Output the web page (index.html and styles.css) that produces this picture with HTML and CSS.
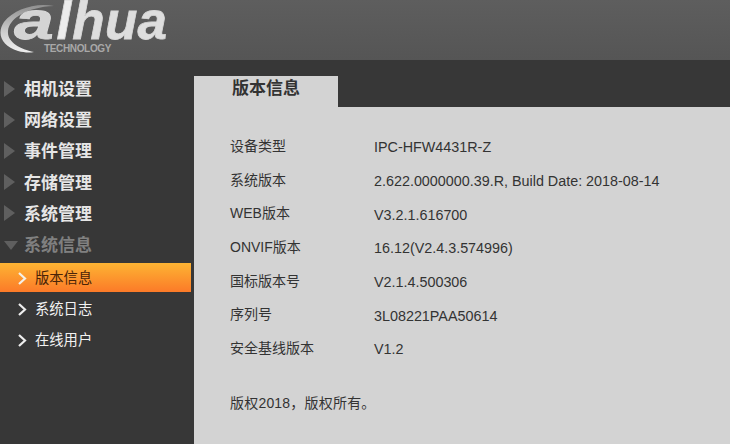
FILE: index.html
```html
<!DOCTYPE html>
<html lang="zh">
<head>
<meta charset="utf-8">
<title>版本信息</title>
<link rel="stylesheet" href="styles.css">
</head>
<body>
<header class="header">
  <div class="logo">
    <svg class="swoosh" width="70" height="56" viewBox="0 0 70 56">
      <defs><linearGradient id="sw" x1="0" y1="0" x2="0" y2="1"><stop offset="0" stop-color="#8f8f8f"/><stop offset=".6" stop-color="#d0d0d0"/><stop offset="1" stop-color="#eeeeee"/></linearGradient></defs>
      <path d="M54 3C36 -1 14 6 4 19C-4 31 2 43 18 48C24 49.500 29 50 34 49C20 46 7 39 8 28C9 16 26 4 54 3Z" fill="url(#sw)"/>
    </svg>
    <div class="wordmark"><span class="wm-a">a</span><span class="wm-l">l</span><span class="wm-hua">hua</span></div>
    <span class="tech">TECHNOLOGY</span>
  </div>
</header>
<div class="main">
  <nav class="sidebar">
    <ul class="menu">
      <li class="menu-item"><i class="tri"></i>相机设置</li>
      <li class="menu-item"><i class="tri"></i>网络设置</li>
      <li class="menu-item"><i class="tri"></i>事件管理</li>
      <li class="menu-item"><i class="tri"></i>存储管理</li>
      <li class="menu-item"><i class="tri"></i>系统管理</li>
      <li class="menu-item open"><i class="tri-down"></i>系统信息</li>
    </ul>
    <ul class="submenu">
      <li class="sub-item active"><svg class="chev" width="11" height="13" viewBox="0 0 11 13"><path d="M2 1l6 5.500-6 5.500" fill="none" stroke="#f4f0e8" stroke-width="2.200"/></svg>版本信息</li>
      <li class="sub-item"><svg class="chev" width="11" height="13" viewBox="0 0 11 13"><path d="M2 1l6 5.500-6 5.500" fill="none" stroke="#eee" stroke-width="2.200"/></svg>系统日志</li>
      <li class="sub-item"><svg class="chev" width="11" height="13" viewBox="0 0 11 13"><path d="M2 1l6 5.500-6 5.500" fill="none" stroke="#eee" stroke-width="2.200"/></svg>在线用户</li>
    </ul>
  </nav>
  <section class="content">
    <div class="tab">版本信息</div>
    <div class="panel">
      <dl class="info">
        <div class="row"><dt>设备类型</dt><dd>IPC-HFW4431R-Z</dd></div>
        <div class="row"><dt>系统版本</dt><dd>2.622.0000000.39.R, Build Date: 2018-08-14</dd></div>
        <div class="row"><dt>WEB版本</dt><dd>V3.2.1.616700</dd></div>
        <div class="row"><dt>ONVIF版本</dt><dd>16.12(V2.4.3.574996)</dd></div>
        <div class="row"><dt>国标版本号</dt><dd>V2.1.4.500306</dd></div>
        <div class="row"><dt>序列号</dt><dd>3L08221PAA50614</dd></div>
        <div class="row"><dt>安全基线版本</dt><dd>V1.2</dd></div>
      </dl>
      <p class="copyright">版权2018，版权所有。</p>
    </div>
  </section>
</div>
</body>
</html>
```
FILE: styles.css
```css
* { box-sizing: border-box; margin: 0; padding: 0; }
html, body { width: 730px; height: 444px; overflow: hidden; }
body { background: #373737; font-family: "Liberation Sans", "Noto Sans CJK SC", sans-serif; font-size: 14px; }
ul { list-style: none; }
.header { height: 60px; background: linear-gradient(#5e5e5e, #555555); }
.logo { position: relative; width: 190px; height: 60px; }
.swoosh { position: absolute; left: 0; top: 3px; }
.wordmark { position: absolute; left: 14px; top: 2px; display: flex; font-size: 53px; line-height: 38px; font-weight: 700; font-style: italic; color: #d8d8d8; -webkit-text-stroke: .8px #d8d8d8; }
.wm-a { display: block; margin-right: 13px; transform: scaleX(1.35); transform-origin: left center; color: #d4d4d4; }
.wm-l { display: block; margin-right: 1px; color: #ececec; }
.wm-hua { display: block; letter-spacing: .3px; color: #dedede; }
.tech { position: absolute; left: 44px; top: 43px; font-size: 10px; line-height: 11px; font-weight: 700; color: #a8a8a8; letter-spacing: -.35px; }
.main { display: flex; height: 384px; }
.sidebar { width: 194px; flex: none; padding-top: 12px; }
.menu-item { display: flex; align-items: center; height: 31.200px; padding-left: 4px; font-size: 17px; font-weight: 700; color: #e6e6e6; }
.menu-item.open { color: #808080; }
.tri { width: 0; height: 0; margin-right: 9px; margin-top: 2px; border-style: solid; border-width: 8px 0 8px 11px; border-color: transparent transparent transparent #5f5f5f; }
.tri-down { width: 0; height: 0; margin-right: 6px; margin-top: 3px; border-style: solid; border-width: 9px 7px 0 7px; border-color: #5f5f5f transparent transparent transparent; }
.submenu { margin-top: 4px; }
.sub-item { display: flex; align-items: center; height: 31px; padding-left: 17px; font-size: 14.300px; color: #f2f2f2; }
.sub-item .chev { margin-right: 7px; margin-top: 4px; }
.sub-item.active { width: 191px; height: 29px; margin-top: 1px; padding-bottom: 2px; background: linear-gradient(#fdb433, #fc7a28); color: #4a2408; }
.content { flex: 1; padding-top: 16px; display: flex; flex-direction: column; }
.tab { width: 144px; height: 31px; padding-left: 38px; background: #d3d3d3; font-size: 17px; font-weight: 700; line-height: 26px; color: #333; }
.panel { flex: 1; background: #d3d3d3; padding: 21px 0 0 36px; }
.info { display: flex; flex-direction: column; }
.row { display: flex; align-items: center; height: 33.700px; color: #333; }
.row dt { width: 144px; }
.row dd { font-size: 14.350px; margin-top: 5px; }
.copyright { margin-top: 28px; color: #333; font-size: 14px; letter-spacing: .2px; }
```
